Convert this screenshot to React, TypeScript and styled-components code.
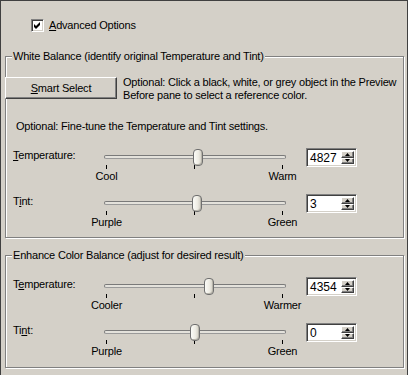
import React from 'react';
import styled, { createGlobalStyle } from 'styled-components';

const Global = createGlobalStyle`
  html, body { margin: 0; padding: 0; background: #D4D0C8; }
  body {
    font-family: "Liberation Sans", Arial, sans-serif;
    font-size: 11px;
    letter-spacing: -0.2px;
    color: #000;
  }
`;

const Window = styled.div`
  width: 408px;
  height: 375px;
  box-sizing: border-box;
  background: #d4d0c8;
  border: 1px solid #404040;
  border-bottom: none;
  display: flex;
  flex-direction: column;
  overflow: hidden;
`;

const CheckRow = styled.label`
  display: flex;
  align-items: center;
  gap: 5px;
  height: 13px;
  margin: 18px 0 0 30px;
  line-height: 13px;
`;

const CheckBox = styled.span`
  width: 13px;
  height: 13px;
  box-sizing: border-box;
  background: #fff;
  border: 1px solid;
  border-color: #808080 #fff #fff #808080;
  box-shadow: inset 1px 1px 0 #404040, inset -1px -1px 0 #d4d0c8;
  display: flex;
  align-items: center;
  justify-content: center;
`;

const Accel = styled.span`
  text-decoration: underline;
`;

const Group = styled.fieldset<{ $mt: number; $pb: number }>`
  margin: ${(p) => p.$mt}px 3px 0 4px;
  padding: 0 0 ${(p) => p.$pb}px 0;
  border: 1px solid #808080;
  box-shadow: inset 1px 1px 0 #fff, 1px 1px 0 #fff;
  min-inline-size: 0;
`;

const Legend = styled.legend`
  margin-left: 6px;
  padding: 0 1px;
  line-height: 13px;
  background: #d4d0c8;
  white-space: nowrap;
`;

const Body = styled.div`
  display: flex;
  flex-direction: column;
`;

const ButtonRow = styled.div`
  display: flex;
  align-items: flex-start;
  margin: 14px 0 0 -1px;
`;

const PushButton = styled.button`
  width: 112px;
  height: 22px;
  box-sizing: border-box;
  padding: 0;
  font: inherit;
  letter-spacing: inherit;
  color: #000;
  background: #d4d0c8;
  border: 1px solid;
  border-color: #fff #404040 #404040 #fff;
  box-shadow: inset -1px -1px 0 #808080;
  line-height: 18px;
`;

const Hint = styled.div`
  margin: -1px 0 0 6px;
  line-height: 13px;
  white-space: nowrap;
`;

const FineTune = styled.div`
  margin: 18px 0 0 10px;
  line-height: 13px;
  white-space: nowrap;
`;

const SliderRow = styled.div<{ $mt: number }>`
  display: flex;
  align-items: flex-start;
  height: 35px;
  margin-top: ${(p) => p.$mt}px;
`;

const RowLabel = styled.div`
  width: 98px;
  box-sizing: border-box;
  padding-left: 7px;
  margin-top: 1px;
  line-height: 13px;
`;

const SliderArea = styled.div`
  position: relative;
  width: 182px;
  padding-top: 7px;
  display: flex;
  flex-direction: column;
`;

const Track = styled.div`
  height: 4px;
  box-sizing: border-box;
  border: 1px solid #7a7a7a;
  border-bottom-color: #9a9a9a;
  border-radius: 3px;
  background: #e4e2dc;
`;

const Thumb = styled.div`
  position: absolute;
  top: 1px;
  width: 10px;
  height: 17px;
  box-sizing: border-box;
  border: 1px solid #6f6f6f;
  border-radius: 4px;
  background: linear-gradient(90deg, #fbfbf7 0%, #eeece4 55%, #cfccc2 100%);
  box-shadow: inset -1px -1px 0 #b8b5ab;
`;

const Ticks = styled.div`
  display: flex;
  justify-content: space-between;
  padding: 0 3px 0 2px;
  margin-top: 6px;
`;

const Tick = styled.span`
  width: 1px;
  height: 4px;
  background: #000;
`;

const TickLabels = styled.div`
  display: flex;
  justify-content: space-between;
  padding: 0 3px 0 2px;
  margin-top: 1px;
  line-height: 13px;
`;

const TickLabel = styled.span`
  width: 1px;
  display: flex;
  justify-content: center;
  white-space: nowrap;
`;

const Spin = styled.div`
  margin-left: 20px;
  width: 51px;
  height: 19px;
  box-sizing: border-box;
  border: 1px solid;
  border-color: #808080 #fff #fff #808080;
  box-shadow: inset 1px 1px 0 #404040, inset -1px -1px 0 #d4d0c8;
  background: #fff;
  padding: 2px;
  display: flex;
`;

const SpinValue = styled.div`
  flex: 1;
  padding-left: 1px;
  font-size: 12px;
  letter-spacing: 0;
  line-height: 15px;
`;

const SpinButtons = styled.div`
  width: 13px;
  display: flex;
  flex-direction: column;
`;

const SpinButton = styled.div`
  flex: 1;
  box-sizing: border-box;
  background: #d4d0c8;
  border: 1px solid;
  border-color: #fff #404040 #404040 #fff;
  box-shadow: inset -1px -1px 0 #808080;
  display: flex;
  align-items: center;
  justify-content: center;
`;

const Arrow = ({ up }: { up?: boolean }) => (
  <svg width="5" height="3" viewBox="0 0 5 3" style={{ display: 'block' }}>
    <polygon points={up ? '2.5,0 5,3 0,3' : '0,0 5,0 2.5,3'} fill="#000" />
  </svg>
);

type SliderProps = {
  label: React.ReactNode;
  pos: number;
  left: string;
  right: string;
  value: string;
  mt: number;
};

const Slider = ({ label, pos, left, right, value, mt }: SliderProps) => (
  <SliderRow $mt={mt}>
    <RowLabel>{label}</RowLabel>
    <SliderArea>
      <Track />
      <Thumb style={{ left: `${Math.round(pos * 172)}px` }} />
      <Ticks>
        <Tick />
        <Tick />
        <Tick />
      </Ticks>
      <TickLabels>
        <TickLabel>{left}</TickLabel>
        <TickLabel>{right}</TickLabel>
      </TickLabels>
    </SliderArea>
    <Spin>
      <SpinValue>{value}</SpinValue>
      <SpinButtons>
        <SpinButton>
          <Arrow up />
        </SpinButton>
        <SpinButton>
          <Arrow />
        </SpinButton>
      </SpinButtons>
    </Spin>
  </SliderRow>
);

export default function App() {
  return (
    <>
      <Global />
      <Window>
        <CheckRow>
          <CheckBox>
            <svg width="7" height="7" viewBox="0 0 7 7" style={{ display: 'block' }}>
              <polygon points="0,2 2,4 6,0 6,3 2,7 0,5" fill="#000" />
            </svg>
          </CheckBox>
          <span>
            <Accel>A</Accel>dvanced Options
          </span>
        </CheckRow>

        <Group $mt={18} $pb={8}>
          <Legend>White Balance (identify original Temperature and Tint)</Legend>
          <Body>
            <ButtonRow>
              <PushButton>
                <Accel>S</Accel>mart Select
              </PushButton>
              <Hint>
                Optional: Click a black, white, or grey object in the Preview
                <br />
                Before pane to select a reference color.
              </Hint>
            </ButtonRow>
            <FineTune>Optional: Fine-tune the Temperature and Tint settings.</FineTune>
            <Slider
              mt={15}
              label={
                <>
                  <Accel>T</Accel>emperature:
                </>
              }
              pos={0.517}
              left="Cool"
              right="Warm"
              value="4827"
            />
            <Slider
              mt={11}
              label={
                <>
                  T<Accel>i</Accel>nt:
                </>
              }
              pos={0.512}
              left="Purple"
              right="Green"
              value="3"
            />
          </Body>
        </Group>

        <Group $mt={11} $pb={9}>
          <Legend>Enhance Color Balance (adjust for desired result)</Legend>
          <Body>
            <Slider
              mt={15}
              label={
                <>
                  T<Accel>e</Accel>mperature:
                </>
              }
              pos={0.581}
              left="Cooler"
              right="Warmer"
              value="4354"
            />
            <Slider
              mt={11}
              label={
                <>
                  Ti<Accel>n</Accel>t:
                </>
              }
              pos={0.5}
              left="Purple"
              right="Green"
              value="0"
            />
          </Body>
        </Group>
      </Window>
    </>
  );
}
